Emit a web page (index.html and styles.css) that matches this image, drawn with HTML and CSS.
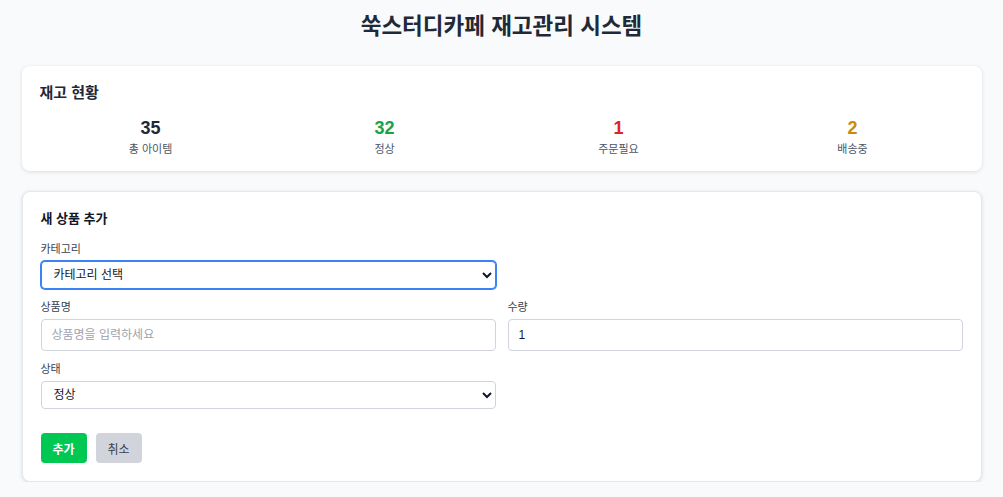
FILE: index.html
```html
<!DOCTYPE html>
<html lang="ko">
<head>
<meta charset="utf-8">
<title>쑥스터디카페 재고관리 시스템</title>
<link rel="stylesheet" href="styles.css">
</head>
<body>
<div class="app">
  <h1 class="title">쑥스터디카페 재고관리 시스템</h1>

  <section class="card summary">
    <h2 class="summary-title">재고 현황</h2>
    <div class="stats">
      <div class="stat"><div class="stat-num num-total">35</div><div class="stat-label">총 아이템</div></div>
      <div class="stat"><div class="stat-num num-ok">32</div><div class="stat-label">정상</div></div>
      <div class="stat"><div class="stat-num num-order">1</div><div class="stat-label">주문필요</div></div>
      <div class="stat"><div class="stat-num num-ship">2</div><div class="stat-label">배송중</div></div>
    </div>
  </section>

  <section class="card form-card">
    <h2 class="form-title">새 상품 추가</h2>
    <div class="form-grid">
      <div class="field">
        <label class="label">카테고리</label>
        <select class="control select focused">
          <option>카테고리 선택</option>
        </select>
      </div>
      <div class="field"></div>
      <div class="field">
        <label class="label">상품명</label>
        <input class="control input" type="text" placeholder="상품명을 입력하세요">
      </div>
      <div class="field">
        <label class="label">수량</label>
        <input class="control input" type="number" value="1">
      </div>
      <div class="field">
        <label class="label">상태</label>
        <select class="control select">
          <option>정상</option>
        </select>
      </div>
    </div>
    <div class="actions">
      <button class="btn btn-add">추가</button>
      <button class="btn btn-cancel">취소</button>
    </div>
  </section>
</div>
</body>
</html>
```

FILE: styles.css
```css
* { box-sizing: border-box; }

body {
  margin: 0;
  background: #f9fafb;
  font-family: "Liberation Sans", "Noto Sans CJK KR", sans-serif;
  color: #1f2937;
}

.app {
  max-width: 960px;
  margin: 0 auto;
  padding-top: 12px;
}

.title {
  margin: 0 0 24px;
  text-align: center;
  font-size: 22.5px;
  line-height: 30px;
  font-weight: 700;
  color: #1f2937;
}

.card {
  background: #fff;
  border-radius: 8px;
  box-shadow: 0 1px 4px rgba(0, 0, 0, 0.12);
}

.summary {
  padding: 17px 18px 15px;
  margin-bottom: 20px;
}

.summary-title {
  margin: 0 0 14px;
  font-size: 15px;
  line-height: 20px;
  font-weight: 700;
  color: #1f2937;
}

.stats {
  display: grid;
  grid-template-columns: repeat(4, 1fr);
  gap: 12px;
}

.stat { text-align: center; }

.stat-num {
  font-size: 18px;
  line-height: 22px;
  font-weight: 700;
}

.num-total { color: #1f2937; }
.num-ok { color: #16a34a; }
.num-order { color: #dc2626; }
.num-ship { color: #ca8a04; }

.stat-label {
  margin-top: 3px;
  font-size: 11px;
  line-height: 14px;
  color: #4b5563;
}

.form-card {
  border: 1px solid #e5e7eb;
  padding: 18px 18px 18px;
}

.form-title {
  margin: 0 0 15px;
  font-size: 13px;
  line-height: 18px;
  font-weight: 700;
  color: #111827;
}

.form-grid {
  display: grid;
  grid-template-columns: 1fr 1fr;
  column-gap: 12px;
  row-gap: 12px;
}

.field {
  display: flex;
  flex-direction: column;
}

.label {
  font-size: 11px;
  line-height: 13px;
  color: #374151;
  margin-bottom: 5px;
}

.control {
  font-family: "Liberation Sans", "Noto Sans CJK KR", sans-serif;
  font-size: 12px;
  color: #111827;
  background: #fff;
  border: 1px solid #d1d5db;
  border-radius: 4px;
  width: 100%;
}

.select {
  height: 28px;
  padding: 0 8px;
}

.select.focused {
  border-color: #3b82f6;
  box-shadow: 0 0 0 1px #3b82f6;
  outline: none;
}

.input {
  height: 32px;
  padding: 0 10px;
  outline: none;
}

.input::placeholder { color: #9ca3af; }

.actions {
  display: flex;
  gap: 9px;
  margin-top: 24px;
}

.btn {
  height: 30px;
  width: 46px;
  border: none;
  border-radius: 4px;
  font-family: "Liberation Sans", "Noto Sans CJK KR", sans-serif;
  font-size: 12px;
  cursor: pointer;
}

.btn-add {
  background: #00c853;
  color: #fff;
  font-weight: 700;
}

.btn-cancel {
  background: #d1d5db;
  color: #374151;
}
```
